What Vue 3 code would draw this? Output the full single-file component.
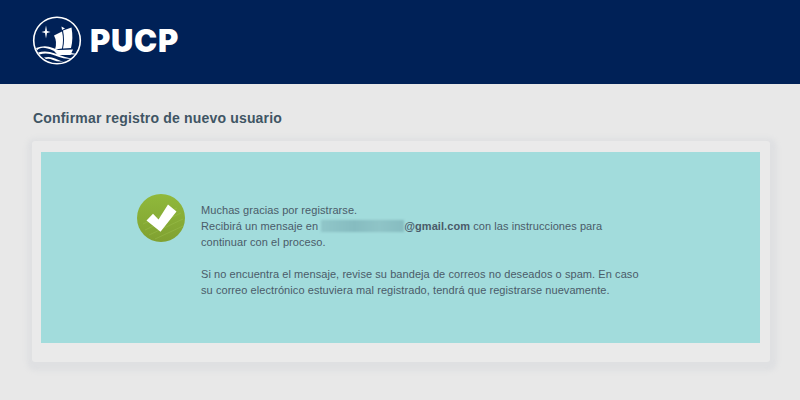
<template>
    <div class="page">
        <header class="top-bar">
            <svg class="logo-mark" width="50" height="50" viewBox="0 0 50 50">
                <circle cx="25" cy="25.500" r="23.300" fill="none" stroke="#fff" stroke-width="1.600" />
                <path d="M14 10.500 L15 16 L18.500 17 L15 18 L14 23.500 L13 18 L9.500 17 L13 16 Z" fill="#fff" />
                <path d="M29.500 11.500 L33 13.500 L30 15 Z" fill="#fff" />
                <path d="M22 20.500 L30 16.500 Q32 25 30 33.500 L23 34.500 Q25.500 27 22 20.500 Z" fill="#fff" />
                <path d="M31 15.500 L39.500 12.500 Q41.500 24 39 33 L31 33.500 Q33 25 31 15.500 Z" fill="#fff" />
                <path d="M21.500 35.200 L41 34.500 L38.500 40 L25.500 40 Z" fill="#fff" />
                <path d="M4 33 Q13 29.500 21 33 T45 39 Q33 41 21 35.500 T5 35.500 Z" fill="#fff" />
                <path d="M6 37.500 Q14 35 23 38.500 T41 44 Q31 44 23 40.500 T7.500 39.500 Z" fill="#fff" />
                <path d="M12 42.500 Q18 41 23 43.500 T32 46.500 Q25 47 21 45 T14 44 Z" fill="#fff" />
            </svg>
            <span class="brand">PUCP</span>
        </header>

        <main class="content">
            <h1 class="title">Confirmar registro de nuevo usuario</h1>
            <section class="card">
                <div class="message-box">
                    <svg class="check" width="48" height="48" viewBox="0 0 48 48">
                        <defs>
                            <linearGradient id="greenFill" x1="0" y1="0" x2="0" y2="1">
                                <stop offset="0" stop-color="#90b93b" />
                                <stop offset="1" stop-color="#80a131" />
                            </linearGradient>
                        </defs>
                        <circle cx="24" cy="24" r="24" fill="url(#greenFill)" />
                        <path d="M6 30 L40 14 M8 36 L44 19 M12 41 L46 25 M18 45 L46 32" stroke="#a9cc5c" stroke-width="1" opacity="0.3" />
                        <path d="M9.500 26.500 L16 19.800 L21.500 25.500 L31 10.500 L39.500 17.500 L23.500 37.800 Z" fill="#fff" />
                    </svg>
                    <div class="message">
                        <p>
                            Muchas gracias por registrarse.<br />
                            Recibirá un mensaje en <span class="blurred"></span><b>@gmail.com</b> con las instrucciones para<br />
                            continuar con el proceso.
                        </p>
                        <p>
                            Si no encuentra el mensaje, revise su bandeja de correos no deseados o spam. En caso<br />
                            su correo electrónico estuviera mal registrado, tendrá que registrarse nuevamente.
                        </p>
                    </div>
                </div>
            </section>
        </main>
    </div>
</template>

<script setup>
</script>

<style>
html, body {
    background: #e8e8e8;
}
</style>

<style scoped>
.page {
    width: 800px;
    height: 400px;
    overflow: hidden;
    background: #e8e8e8;
    font-family: "Liberation Sans", Arial, sans-serif;
}

.top-bar {
    height: 84px;
    background: #002157;
    display: flex;
    align-items: center;
    padding: 0 0 4px 32px;
    box-sizing: border-box;
    gap: 8px;
}

.brand {
    color: #fff;
    font-family: Inter, sans-serif;
    font-weight: 900;
    font-size: 31px;
    line-height: 1;
    letter-spacing: 0.7px;
}

.content {
    padding: 26px 30px 0 32px;
}

.title {
    margin: 0 0 15px 1px;
    font-size: 14px;
    line-height: 16px;
    font-weight: bold;
    color: #3f5564;
    letter-spacing: 0.18px;
}

.card {
    width: 738px;
    height: 221px;
    box-sizing: border-box;
    padding: 11px 10px 19px 9px;
    background: #eaeaea;
    box-shadow: 1px 3px 5px 6px #dfe0e2;
    border-radius: 3px;
}

.message-box {
    height: 191px;
    background: #a2dcdc;
    display: flex;
    align-items: flex-start;
    padding: 42px 0 0 96px;
    box-sizing: border-box;
}

.check {
    flex: none;
    margin-right: 16px;
}

.message {
    margin-top: 8px;
    font-size: 11px;
    line-height: 16px;
    letter-spacing: 0.07px;
    color: #4a5b69;
}

.message p {
    margin: 0 0 16px;
}

.blurred {
    display: inline-block;
    width: 83px;
    height: 12px;
    vertical-align: -2px;
    background: linear-gradient(90deg, #90c6c9, #86bcc0 40%, #8fc4c7 70%, #86bcc0);
    filter: blur(1px);
}
</style>
